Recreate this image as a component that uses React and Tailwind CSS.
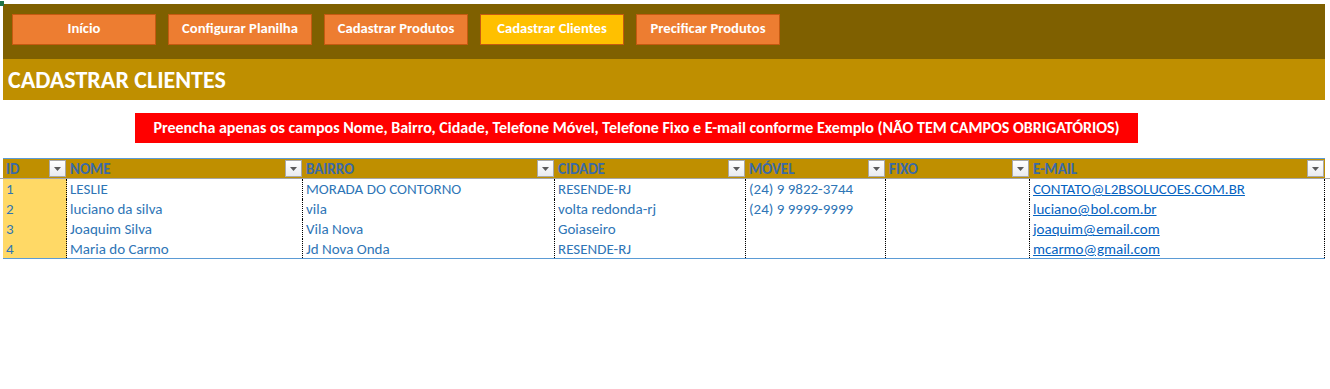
import React from "react";

const cols = [
  { key: "id", label: "ID" },
  { key: "nome", label: "NOME" },
  { key: "bairro", label: "BAIRRO" },
  { key: "cidade", label: "CIDADE" },
  { key: "movel", label: "MÓVEL" },
  { key: "fixo", label: "FIXO" },
  { key: "email", label: "E-MAIL" },
];

const rows = [
  { id: "1", nome: "LESLIE", bairro: "MORADA DO CONTORNO", cidade: "RESENDE-RJ", movel: "(24) 9 9822-3744", fixo: "", email: "CONTATO@L2BSOLUCOES.COM.BR" },
  { id: "2", nome: "luciano da silva", bairro: "vila", cidade: "volta redonda-rj", movel: "(24) 9 9999-9999", fixo: "", email: "luciano@bol.com.br" },
  { id: "3", nome: "Joaquim Silva", bairro: "Vila Nova", cidade: "Goiaseiro", movel: "", fixo: "", email: "joaquim@email.com" },
  { id: "4", nome: "Maria do Carmo", bairro: "Jd Nova Onda", cidade: "RESENDE-RJ", movel: "", fixo: "", email: "mcarmo@gmail.com" },
];

const navs = ["Início", "Configurar Planilha", "Cadastrar Produtos", "Cadastrar Clientes", "Precificar Produtos"];

const grid = "grid grid-cols-[64px_236px_252px_191px_140px_144px_295px]";

function FilterBtn() {
  return (
    <div className="w-[17px] h-[17px] mr-[1px] border border-[#a9a9a9] bg-gradient-to-b from-white to-[#e9ebef] flex items-center justify-center">
      <svg width="7" height="4" viewBox="0 0 7 4">
        <polygon points="0,0 7,0 3.5,4" fill="#5a5a5a" />
      </svg>
    </div>
  );
}

export default function App() {
  return (
    <div className="relative w-[1330px] h-[389px] bg-white overflow-hidden font-['Carlito','Lato',sans-serif]">
      <div className="absolute left-0 top-[1px] w-[4px] h-[5px] bg-[#217346]" />
      <div className="h-[4px]" />
      <div className="ml-[3px] w-[1322px] h-[55px] bg-[#7F6000] flex gap-[12px] pl-[9px] pt-[10px]">
        {navs.map((n) => (
          <div
            key={n}
            className={`w-[144px] h-[31px] border border-[#c55a11] flex items-center justify-center pb-[2px] text-white font-bold text-[14.67px] leading-none ${n === "Cadastrar Clientes" ? "bg-[#FFC000]" : "bg-[#ED7D31]"}`}
          >
            {n}
          </div>
        ))}
      </div>
      <div className="ml-[3px] w-[1322px] h-[41px] bg-[#BF8F00] flex items-center pl-[5px] text-white font-bold text-[24px] leading-none">
        CADASTRAR CLIENTES
      </div>
      <div className="mt-[13px] ml-[135px] w-[1003px] h-[30px] bg-[#FF0000] flex items-center justify-center text-white font-bold text-[16px] leading-none whitespace-nowrap">
        Preencha apenas os campos Nome, Bairro, Cidade, Telefone Móvel, Telefone Fixo e E-mail conforme Exemplo (NÃO TEM CAMPOS OBRIGATÓRIOS)
      </div>
      <div className="mt-[15px]">
        <div className={`${grid} ml-[3px] w-[1322px] border-t border-[#5B9BD5]`}>
          {cols.map((c) => (
            <div key={c.key} className="h-[19px] bg-[#BF8F00] flex items-center justify-between pl-[3px] text-[#3a6aa8] font-bold text-[15px] leading-none">
              <span className="pt-[2px]">{c.label}</span>
              <FilterBtn />
            </div>
          ))}
        </div>
        <div className="w-full h-[1px] bg-[#a6a6a6]" />
        <div className={`${grid} ml-[3px] w-[1322px] border-b border-[#5B9BD5]`}>
          {rows.map((r, i) =>
            cols.map((c) => (
              <div
                key={c.key + i}
                className={`${i === 3 ? "h-[19px]" : "h-[20px]"} border-r border-dotted border-black flex items-center pl-[3px] pt-[1px] text-[15px] leading-none whitespace-nowrap ${c.key === "id" ? "bg-[#FFD966] text-[#2E75B6]" : c.key === "email" ? "text-[#0563C1]" : "text-[#2E75B6]"}`}
              >
                {c.key === "email" ? <span className="underline">{r[c.key]}</span> : r[c.key]}
              </div>
            ))
          )}
        </div>
      </div>
    </div>
  );
}
